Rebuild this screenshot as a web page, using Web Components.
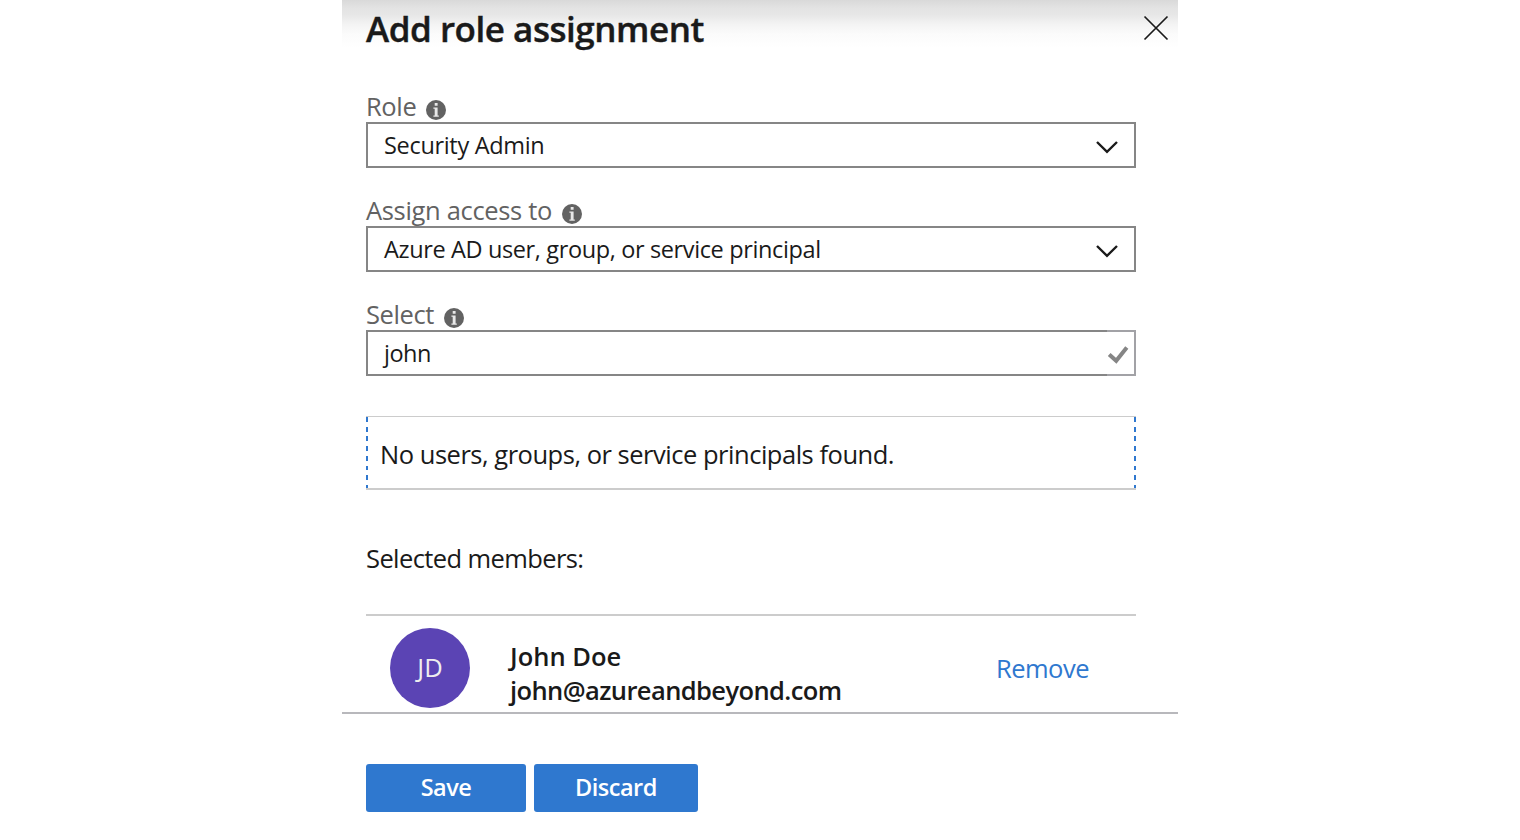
<!DOCTYPE html>
<html lang="en">
<head>
<meta charset="utf-8">
<title>Add role assignment</title>
<style>
  html, body { margin: 0; background: #fff; }
  body { font-family: "Open Sans", "Noto Sans", sans-serif; font-size: 25.5px; color: #1a1a1a; height: 840px; overflow: hidden; }
</style>
</head>
<body>
<role-panel>
  <panel-header slot="header">Add role assignment</panel-header>
  <form-field label="Role"><select-box>Security Admin</select-box></form-field>
  <form-field label="Assign access to" style="--track:-.33px"><select-box style="letter-spacing:-.37px">Azure AD user, group, or service principal</select-box></form-field>
  <form-field label="Select"><search-box>john</search-box></form-field>
  <result-box>No users, groups, or service principals found.</result-box>
  <member-list heading="Selected members:">
    <member-row initials="JD" name="John Doe" email="john@azureandbeyond.com"></member-row>
  </member-list>
  <action-button slot="actions" style="width:160px">Save</action-button>
  <action-button slot="actions" style="width:164px">Discard</action-button>
</role-panel>

<script>
function define(name, render) {
  customElements.define(name, class extends HTMLElement {
    constructor() {
      super();
      this.attachShadow({ mode: 'open' });
    }
    connectedCallback() {
      this.shadowRoot.innerHTML = render(this);
    }
  });
}

define('role-panel', () => `
<style>
  :host { display: block; width: 836px; margin: 0 auto; }
  .body { display: flex; flex-direction: column; gap: 24px; padding: 32px 42px 0 24px; height: 624px; }
  footer { display: flex; gap: 8px; padding: 50px 24px 0; border-top: 2px solid #b8b8bc; }
</style>
<slot name="header"></slot>
<div class="body"><slot></slot></div>
<footer><slot name="actions"></slot></footer>`);

define('panel-header', () => `
<style>
  :host { display: flex; justify-content: space-between; height: 56px; padding: 0 9px 0 24px;
    background: linear-gradient(#d9d9d9 0, #e3e3e3 8px, #e7e7e7 15px, #f3f3f3 24px, #fbfbfb 34px, #fff 48px); }
  h1 { margin: 0; font-size: 35px; font-weight: 600; line-height: 57px; letter-spacing: -.47px; white-space: nowrap; -webkit-text-stroke: .4px currentColor; }
  svg { margin-top: 15px; }
</style>
<h1><slot></slot></h1>
<svg width="26" height="26" viewBox="0 0 26 26" fill="none" stroke="#1a1a1a" stroke-width="1.7"><path d="M1.5 1.5 24.5 24.5M24.5 1.5 1.5 24.5"/></svg>`);

define('form-field', el => `
<style>
  :host { display: block; height: 80px; }
  label { display: flex; height: 34px; line-height: 37px; color: #626262; letter-spacing: var(--track, -.38px); white-space: nowrap; }
  svg { margin: 12px 0 0 10px; }
</style>
<label>${el.getAttribute('label')}<svg width="20" height="20" viewBox="0 0 20 20"><circle cx="10" cy="10" r="10" fill="#626262"/><path fill="#e8e8e8" d="M8.7 3h2.9v2.7H8.7zM7.4 7.5h4.2v8h1.2v1.2H7.4v-1.2h1.3V8.8H7.4z"/></svg></label>
<slot></slot>`);

define('select-box', () => `
<style>
  :host { display: flex; justify-content: space-between; box-sizing: border-box; height: 46px; padding: 0 16px; border: 2px solid #868686;
    font-size: 23.5px; line-height: 42px; letter-spacing: -.32px; white-space: nowrap; }
  svg { margin-top: 15px; }
</style>
<span><slot></slot></span>
<svg width="23" height="16" viewBox="0 0 23 16" fill="none" stroke="#1a1a1a" stroke-width="2.4"><path d="M2 3 12 12.8 22 3"/></svg>`);

define('search-box', () => `
<style>
  :host { display: grid; grid-template-columns: 1fr 29px; height: 46px; font-size: 23.5px; letter-spacing: -.5px; }
  .text { border: 2px solid #868686; border-right: 0; padding-left: 16px; line-height: 42px; }
  .state { border: 2px solid #a2a2a6; border-left: 0; }
  svg { display: block; margin-top: 13px; }
</style>
<div class="text"><slot></slot></div>
<div class="state"><svg width="23" height="20" viewBox="0 0 23 20" fill="none" stroke="#858585" stroke-width="4"><path d="M2.2 9.4 9.2 15.8 19.8 2.4"/></svg></div>`);

define('result-box', () => `
<style>
  :host { --dash: repeating-linear-gradient(#2f78cf 0 4.8px, transparent 4.8px 9.7px);
    display: block; box-sizing: border-box; height: 74px; margin-top: 16px; padding-left: 14px;
    border-top: 1px solid #ccc; border-bottom: 2px solid #ccc; line-height: 74px; letter-spacing: -.48px; white-space: nowrap;
    background: var(--dash) left / 2px 100% no-repeat, var(--dash) right / 2px 100% no-repeat; }
</style>
<slot></slot>`);

define('member-list', el => `
<style>
  :host { display: block; margin-top: 26px; }
  h2 { margin: 0; height: 74px; font-size: inherit; font-weight: 400; line-height: 36px; letter-spacing: -.6px; }
  .rows { border-top: 2px solid #ccc; }
</style>
<h2>${el.getAttribute('heading')}</h2>
<div class="rows"><slot></slot></div>`);

define('member-row', el => `
<style>
  :host { display: grid; grid-template-columns: 80px 1fr auto; column-gap: 40px; height: 84px; padding: 12px 47px 0 24px; }
  .avatar { width: 80px; height: 80px; border-radius: 50%; background: #5b44b4; color: #eee; text-align: center; line-height: 79px; }
  .who { padding-top: 11px; font-weight: 600; line-height: 34px; white-space: nowrap; }
  .name { letter-spacing: 0; }
  .mail { letter-spacing: -.59px; }
  a { color: #2f78cf; line-height: 80px; letter-spacing: -.5px; }
</style>
<div class="avatar">${el.getAttribute('initials')}</div>
<div class="who"><div class="name">${el.getAttribute('name')}</div><div class="mail">${el.getAttribute('email')}</div></div>
<a>Remove</a>`);

define('action-button', () => `
<style>
  :host { display: block; height: 48px; border-radius: 3px; background: #2f78cf; color: #fff; text-align: center;
    font-size: 23.5px; font-weight: 600; line-height: 47px; letter-spacing: -.5px; }
</style>
<slot></slot>`);
</script>
</body>
</html>
